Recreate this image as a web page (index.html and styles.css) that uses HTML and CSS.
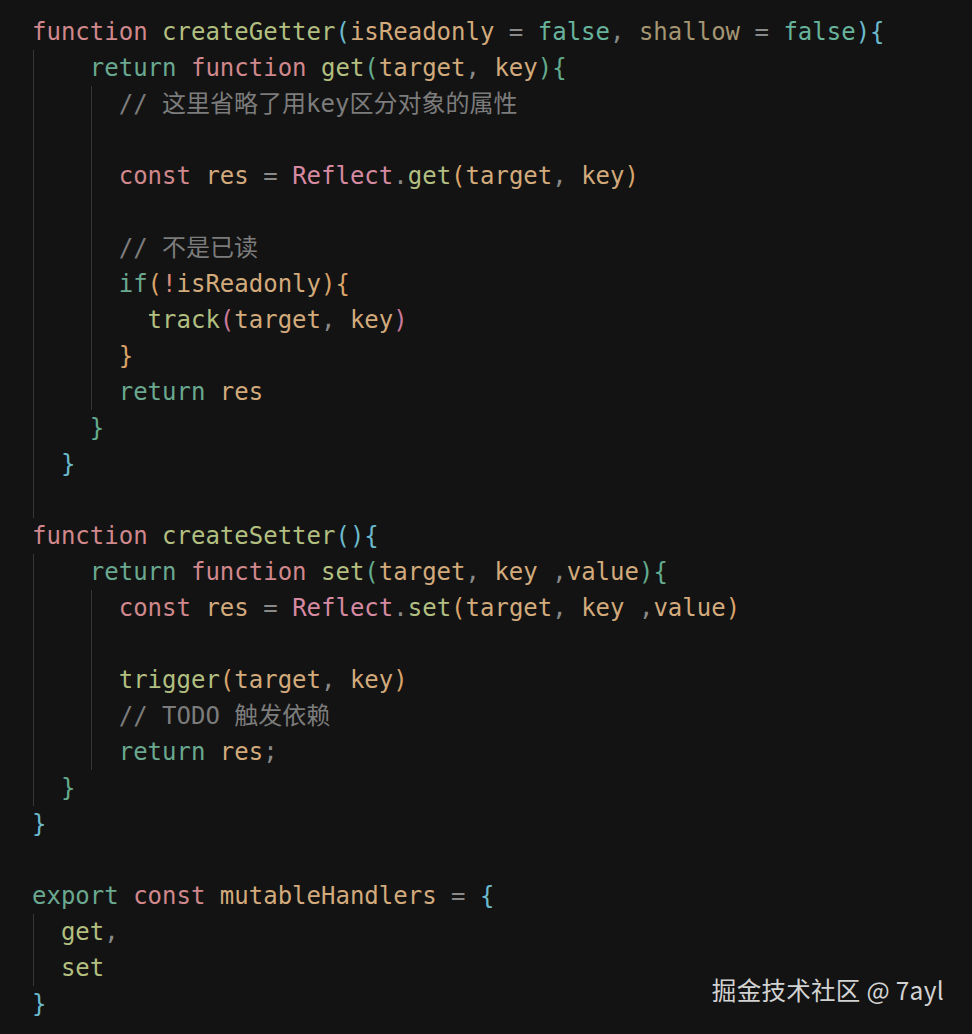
FILE: index.html
```html
<!DOCTYPE html>
<html lang="zh">
<head>
<meta charset="utf-8">
<title>code</title>
<link rel="stylesheet" href="styles.css">
</head>
<body>
<div class="editor">
  <pre class="code"><div class="ln"><span class="kw">function</span> <span class="fn">createGetter</span><span class="b1">(</span><span class="pa">isReadonly</span> <span class="op">=</span> <span class="lit">false</span><span class="op">,</span> <span class="un">shallow</span> <span class="op">=</span> <span class="lit">false</span><span class="b1">){</span></div><div class="ln g1">    <span class="ctl">return</span> <span class="kw">function</span> <span class="fn">get</span><span class="b2">(</span><span class="pa">target</span><span class="op">,</span> <span class="pa">key</span><span class="b2">){</span></div><div class="ln g2">      <span class="cm">// 这里省略了用key区分对象的属性</span></div><div class="ln g2"> </div><div class="ln g2">      <span class="kw">const</span> <span class="pa">res</span> <span class="op">=</span> <span class="cls">Reflect</span><span class="op">.</span><span class="fn">get</span><span class="b3">(</span><span class="pa">target</span><span class="op">,</span> <span class="pa">key</span><span class="b3">)</span></div><div class="ln g2"> </div><div class="ln g2">      <span class="cm">// 不是已读</span></div><div class="ln g2">      <span class="ctl">if</span><span class="b3">(</span><span class="neg">!</span><span class="pa">isReadonly</span><span class="b3">){</span></div><div class="ln g2">        <span class="fn">track</span><span class="b4">(</span><span class="pa">target</span><span class="op">,</span> <span class="pa">key</span><span class="b4">)</span></div><div class="ln g2">      <span class="b3">}</span></div><div class="ln g2">      <span class="ctl">return</span> <span class="pa">res</span></div><div class="ln g1">    <span class="b2">}</span></div><div class="ln g1">  <span class="b1">}</span></div><div class="ln g1"> </div><div class="ln"><span class="kw">function</span> <span class="fn">createSetter</span><span class="b1">(){</span></div><div class="ln g1">    <span class="ctl">return</span> <span class="kw">function</span> <span class="fn">set</span><span class="b2">(</span><span class="pa">target</span><span class="op">,</span> <span class="pa">key</span> <span class="op">,</span><span class="pa">value</span><span class="b2">){</span></div><div class="ln g2">      <span class="kw">const</span> <span class="pa">res</span> <span class="op">=</span> <span class="cls">Reflect</span><span class="op">.</span><span class="fn">set</span><span class="b3">(</span><span class="pa">target</span><span class="op">,</span> <span class="pa">key</span> <span class="op">,</span><span class="pa">value</span><span class="b3">)</span></div><div class="ln g2"> </div><div class="ln g2">      <span class="fn">trigger</span><span class="b3">(</span><span class="pa">target</span><span class="op">,</span> <span class="pa">key</span><span class="b3">)</span></div><div class="ln g2">      <span class="cm">// TODO 触发依赖</span></div><div class="ln g2">      <span class="ctl">return</span> <span class="pa">res</span><span class="op">;</span></div><div class="ln g1">  <span class="b2">}</span></div><div class="ln"><span class="b1">}</span></div><div class="ln"> </div><div class="ln"><span class="ctl">export</span> <span class="kw">const</span> <span class="pa">mutableHandlers</span> <span class="op">=</span> <span class="b1">{</span></div><div class="ln g1">  <span class="fn">get</span><span class="op">,</span></div><div class="ln g1">  <span class="fn">set</span></div><div class="ln"><span class="b1">}</span></div></pre>
  <div class="watermark">掘金技术社区 @ 7ayl</div>
</div>
</body>
</html>
```

FILE: styles.css
```css
html, body {
  margin: 0;
  padding: 0;
  background: #131313;
}

.editor {
  position: relative;
  width: 972px;
  height: 1034px;
  background: #131313;
  overflow: hidden;
}

.code {
  margin: 0;
  padding: 14px 0 0 32px;
  font-family: "DejaVu Sans Mono", "Noto Sans CJK SC", monospace;
  font-size: 24px;
  color: #d4d4d4;
  white-space: pre;
}

.ln {
  height: 36px;
  line-height: 36px;
  margin-left: -32px;
  padding-left: 32px;
}

.g1 {
  background: linear-gradient(#363636, #363636) no-repeat 33px 0 / 1px 100%;
}

.g2 {
  background:
    linear-gradient(#363636, #363636) no-repeat 33px 0 / 1px 100%,
    linear-gradient(#363636, #363636) no-repeat 91px 0 / 1px 100%;
}

.cm {
  color: #7c7c7c;
}

.kw { color: #d0888c; }
.fn { color: #b2bf80; }
.pa { color: #d2aa7c; }
.un { color: #a49673; }
.lit { color: #68b39c; }
.ctl { color: #6aa890; }
.op { color: #8a8a8a; }
.cls { color: #d68aa2; }
.neg { color: #d88d7c; }

.b1 { color: #6bb9cc; }
.b2 { color: #63ab8e; }
.b3 { color: #d9a369; }
.b4 { color: #c9799b; }

.watermark {
  position: absolute;
  right: 28px;
  bottom: 29px;
  font-family: "Noto Sans CJK SC", "Noto Sans", sans-serif;
  font-size: 24.5px;
  letter-spacing: 0.3px;
  line-height: 30px;
  color: #d2d2d2;
}
```
